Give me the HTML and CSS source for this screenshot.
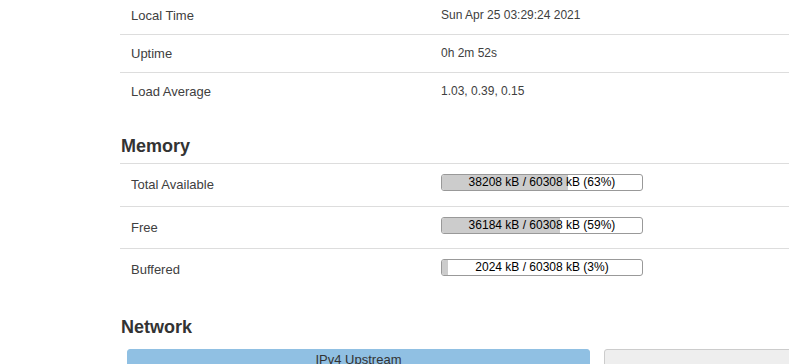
FILE: index.html
```html
<!DOCTYPE html>
<html lang="en">
<head>
  <meta charset="UTF-8">
  <title>Status Overview</title>
  <link rel="stylesheet" href="styles.css">
</head>
<body>
<div class="page">

<div class="table first">
  <div class="tr"><div class="td label">Local Time</div><div class="td value">Sun Apr 25 03:29:24 2021</div></div>
  <div class="tr"><div class="td label">Uptime</div><div class="td value">0h 2m 52s</div></div>
  <div class="tr"><div class="td label">Load Average</div><div class="td value">1.03, 0.39, 0.15</div></div>
</div>

<h3>Memory</h3>
<div class="table">
  <div class="tr"><div class="td label">Total Available</div><div class="td value"><div class="bar"><div class="fill" style="width: 63%"></div><span>38208 kB / 60308 kB (63%)</span></div></div></div>
  <div class="tr"><div class="td label">Free</div><div class="td value"><div class="bar"><div class="fill" style="width: 59%"></div><span>36184 kB / 60308 kB (59%)</span></div></div></div>
  <div class="tr"><div class="td label">Buffered</div><div class="td value"><div class="bar"><div class="fill" style="width: 3%"></div><span>2024 kB / 60308 kB (3%)</span></div></div></div>
</div>

<h3>Network</h3>
<div class="tabs">
  <div class="tab active">IPv4 Upstream</div>
  <div class="tab">IPv6 Upstream</div>
</div>

</div>
</body>
</html>
```

FILE: styles.css
```css
html, body { margin: 0; overflow: hidden; background: #fff; }
body { font-family: "Liberation Sans", Arial, sans-serif; font-size: 13px; color: #404040; }
.page { width: 963px; padding-left: 120px; }
.table.first { margin-top: -4px; }
.tr { display: flex; align-items: center; border-top: 1px solid #ddd; }
.td { padding: 10px 0; line-height: 17px; }
.label { width: 310px; padding-left: 11px; flex: none; }
.value { flex: 1; font-size: 12px; }
h3 { font-size: 18px; line-height: 20px; color: #333; margin: 26px 0 7px 1px; }
.bar { position: relative; width: 200px; height: 15px; border: 1px solid #999; border-radius: 3px; background: #fff; margin-bottom: 4.5px; overflow: hidden; }
.bar .fill { height: 100%; background: #ccc; }
.bar span { position: absolute; left: 0; right: 0; top: 0; text-align: center; line-height: 15px; color: #000; font-size: 12px; }
.tabs { display: flex; gap: 14px; margin: 12px 0 0 7px; }
.tab { width: 461px; flex: none; text-align: center; font-size: 13px; line-height: 20px; padding: 0; border: 1px solid #ccc; border-radius: 3px; background: #eee; color: #404040; }
.tab.active { background: #90c0e3; border-color: #90c0e3; color: #333; }
```
